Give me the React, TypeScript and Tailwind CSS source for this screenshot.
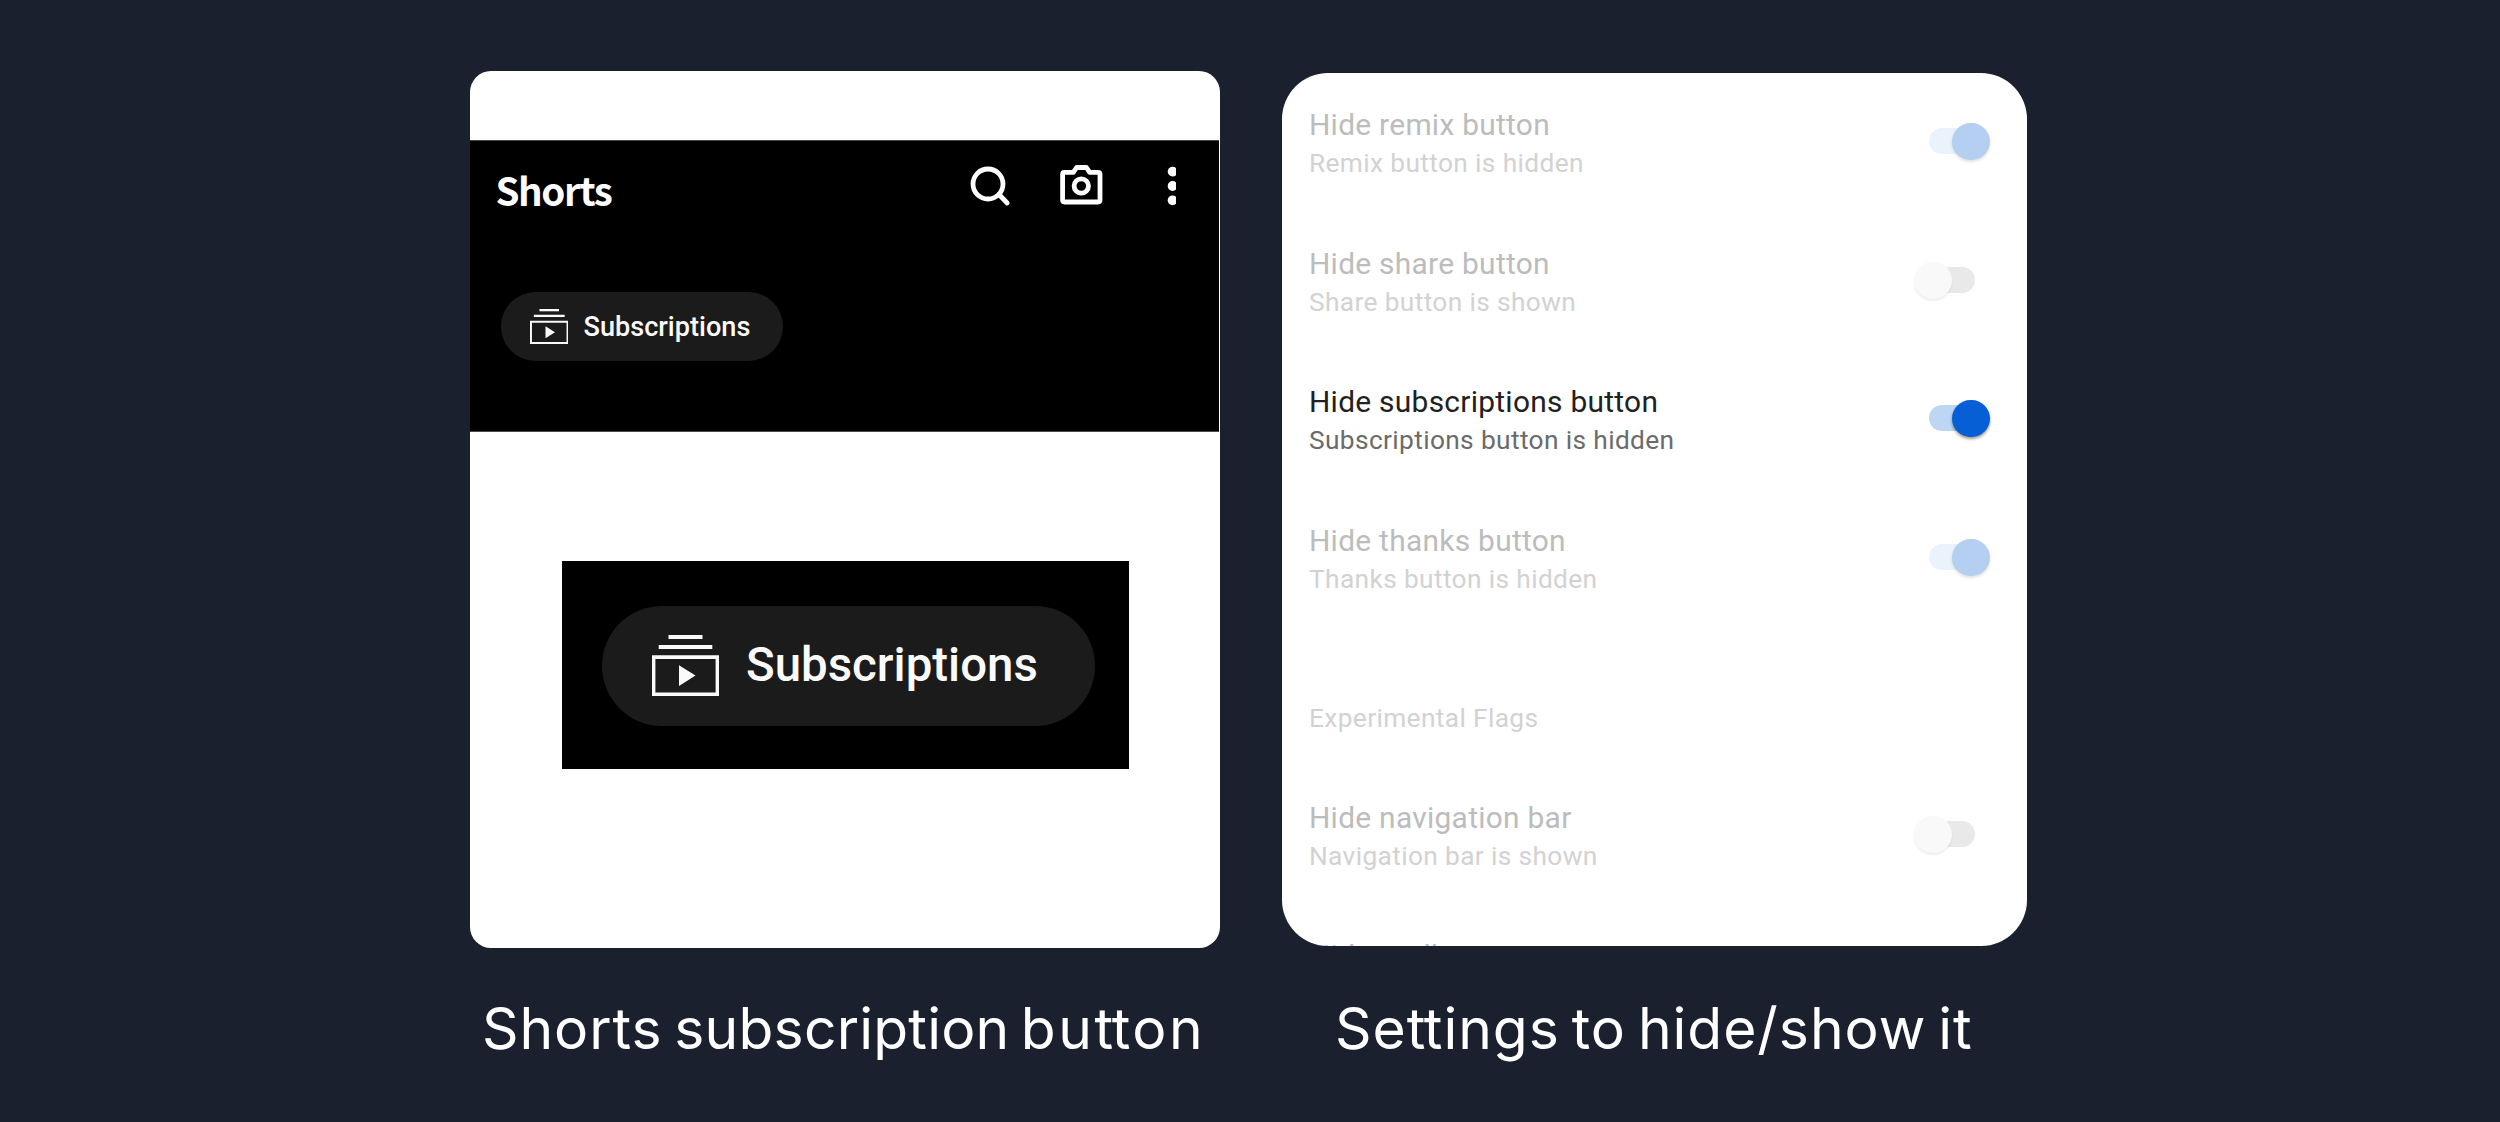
import React from "react";

const rows = [
  { title: "Hide remix button", sub: "Remix button is hidden", on: true },
  { title: "Hide share button", sub: "Share button is shown", on: false },
  { title: "Hide subscriptions button", sub: "Subscriptions button is hidden", on: true, active: true },
  { title: "Hide thanks button", sub: "Thanks button is hidden", on: true },
];

function Toggle({ on, active }: { on: boolean; active?: boolean }) {
  if (!on) {
    return (
      <div className="relative mr-[31px] h-[26px] w-[46px] rounded-full bg-[#e9e9e9]">
        <div className="absolute -left-[15px] -top-[5px] h-[37px] w-[38px] rounded-full bg-[#f9f9f9] shadow-[0_2px_2px_rgba(0,0,0,0.07)]" />
      </div>
    );
  }
  return (
    <div className={`relative mr-[31px] h-[26px] w-[46px] rounded-full ${active ? "bg-[#bed5f4]" : "bg-[#eaf2fc]"}`}>
      <div
        className={`absolute -right-[15px] -top-[5px] h-[37px] w-[38px] rounded-full ${
          active ? "bg-[#065fd4] shadow-[0_2px_3px_rgba(0,0,0,0.4)]" : "bg-[#b4cff2] shadow-[0_2px_3px_rgba(0,0,0,0.12)]"
        }`}
      />
    </div>
  );
}

function Row({ title, sub, on, active }: { title: string; sub: string; on: boolean; active?: boolean }) {
  return (
    <div className="flex h-[138.6px] shrink-0 items-start justify-between">
      <div className="whitespace-nowrap">
        <div className={`text-[29.9px] leading-[38px] tracking-[0.28px] ${active ? "text-[#212121]" : "text-[#bcbcbc]"}`}>{title}</div>
        <div className={`text-[26.3px] leading-[38px] tracking-[0.36px] ${active ? "text-[#6b6b6b]" : "text-[#d2d2d2]"}`}>{sub}</div>
      </div>
      <div className="pt-[22px]">
        <Toggle on={on} active={active} />
      </div>
    </div>
  );
}

function SubscriptionsIcon({ className }: { className: string }) {
  return (
    <svg viewBox="0 0 67 61" fill="#fafafa" className={className} preserveAspectRatio="none">
      <rect x="16.5" y="0" width="34" height="4" />
      <rect x="6.7" y="10" width="53.6" height="4" />
      <path fillRule="evenodd" d="M0 20.3H67V61H0ZM3.4 23.9V57.4H63.6V23.9Z" />
      <path d="M27 30.2V51L43.5 40.6Z" />
    </svg>
  );
}

export default function App() {
  return (
    <div className="flex h-[1122px] w-[2500px] flex-col overflow-hidden bg-[#1b202e] font-['Roboto',sans-serif]">
      <div className="flex pl-[470px] pt-[71px]">
        <div className="w-[750px]">
          <div className="flex h-[877px] flex-col overflow-hidden rounded-[21px] bg-white pt-[69px]">
            <div className="mr-[1.5px] h-[292px] shrink-0 border-y border-[#4a4a4a] bg-black">
              <div className="flex h-[151px] items-start pl-[25.5px]">
                <div className="mt-[20px] w-[474.2px] font-['Noto_Sans_CJK_SC',sans-serif] text-[38.5px] font-bold leading-[56px] tracking-[-1.4px] text-white">
                  Shorts
                </div>
                <svg
                  width="208"
                  height="44"
                  viewBox="968 163 208 44"
                  className="-ml-[2px] mt-[22px] shrink-0"
                  fill="none"
                  stroke="white"
                  strokeWidth="4.8"
                  strokeLinecap="round"
                  strokeLinejoin="round"
                >
                  <circle cx="988" cy="184" r="15" />
                  <path d="M999 194.5L1007.2 203" />
                  <path d="M1064.2 172.4H1073.3L1076.6 167.5H1086.4L1089.7 172.4H1098Q1100 172.4 1100 174.4V200Q1100 202 1098 202H1064.6Q1062.6 202 1062.6 200V174.4Q1062.6 172.4 1064.2 172.4Z" />
                  <circle cx="1081.3" cy="186" r="7.2" />
                  <g fill="white" stroke="none">
                    <circle cx="1172.6" cy="171.6" r="4.9" />
                    <circle cx="1172.6" cy="186" r="4.9" />
                    <circle cx="1172.6" cy="200.3" r="4.9" />
                  </g>
                </svg>
              </div>
              <div className="ml-[31px] flex h-[69px] w-[282px] items-center rounded-full bg-[#1b1b1b] pl-[28.5px]">
                <SubscriptionsIcon className="mb-px h-[35px] w-[38.5px] shrink-0" />
                <span className="ml-[15.5px] pt-[2px] text-[27.1px] font-medium leading-none text-[#fafafa]">Subscriptions</span>
              </div>
            </div>
            <div className="ml-[91.5px] mt-[129px] flex h-[207.5px] w-[567px] shrink-0 items-center bg-black pl-[40.5px] pt-[2px]">
              <div className="flex h-[120px] w-[493px] items-center rounded-full bg-[#1b1b1b] pl-[50px]">
                <SubscriptionsIcon className="h-[61px] w-[67px] shrink-0" />
                <span className="ml-[27px] text-[47.4px] font-medium leading-none text-[#fafafa]">Subscriptions</span>
              </div>
            </div>
          </div>
          <div className="mt-[41px] whitespace-nowrap pl-[12px] font-['Inter',sans-serif] text-[57px] leading-[80px] tracking-[0.9px] text-white [word-spacing:-5px]">
            Shorts <span className="tracking-[0.2px]">subscription </span>
            <span className="tracking-[2.6px]">
              bu<span className="tracking-[-1.5px]">t</span>ton
            </span>
          </div>
        </div>
        <div className="ml-[62px] w-[745px] pt-[2px]">
          <div className="flex h-[873px] flex-col overflow-hidden rounded-[46px] bg-white pl-[27px] pr-[21px] pt-[33px]">
            {rows.map((r) => (
              <Row key={r.title} {...r} />
            ))}
            <div className="h-[138.6px] shrink-0 pt-[39px] text-[26.3px] leading-[38px] tracking-[0.36px] text-[#d2d2d2]">Experimental Flags</div>
            <Row title="Hide navigation bar" sub="Navigation bar is shown" on={false} />
            <div className="-mt-px shrink-0 whitespace-nowrap text-[29.9px] leading-[38px] tracking-[0.28px] text-[#bcbcbc]">Hide toolbar</div>
          </div>
          <div className="mt-[43px] whitespace-nowrap pl-[53px] font-['Inter',sans-serif] text-[57px] leading-[80px] tracking-[0.95px] text-white [word-spacing:-5px]">
            Se<span className="tracking-[-1.5px]">t</span>tings to hide/show it
          </div>
        </div>
      </div>
    </div>
  );
}
